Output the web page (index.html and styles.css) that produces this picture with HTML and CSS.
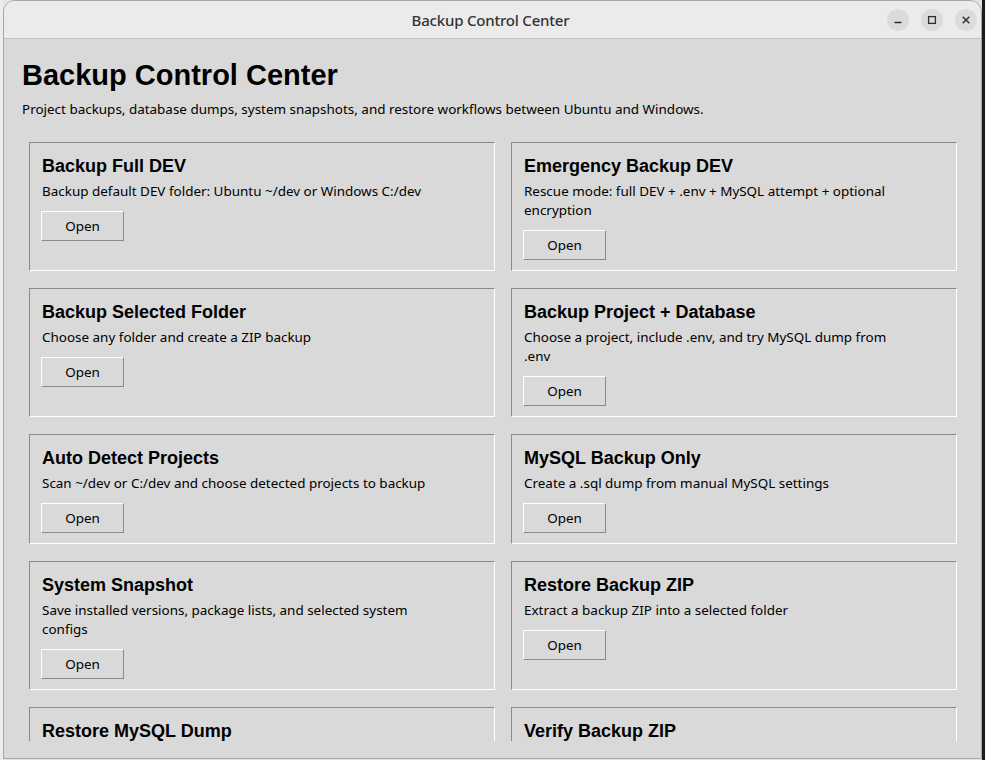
FILE: index.html
```html
<!DOCTYPE html>
<html lang="en">
<head>
<meta charset="utf-8">
<title>Backup Control Center</title>
<link rel="stylesheet" href="styles.css">
</head>
<body>
<div class="desktop">
  <div class="desk-left"></div>
  <div class="window">
    <div class="titlebar">
      <span></span>
      <span class="title">Backup Control Center</span>
      <div class="controls">
        <span class="ctl"><svg width="22" height="22" viewBox="0 0 22 22"><path d="M7.5 13.6H14.5" stroke="#2e2e2e" stroke-width="1.5" fill="none"/></svg></span>
        <span class="ctl"><svg width="22" height="22" viewBox="0 0 22 22"><rect x="7.6" y="7.6" width="6.8" height="6.8" stroke="#2e2e2e" stroke-width="1.3" fill="none"/></svg></span>
        <span class="ctl"><svg width="22" height="22" viewBox="0 0 22 22"><path d="M7.7 7.7L14.3 14.3M14.3 7.7L7.7 14.3" stroke="#2e2e2e" stroke-width="1.4" fill="none"/></svg></span>
      </div>
    </div>
    <div class="content">
      <header class="head">
        <h1>Backup Control Center</h1>
        <p class="sub">Project backups, database dumps, system snapshots, and restore workflows between Ubuntu and Windows.</p>
      </header>
      <div class="viewport">
        <div class="grid">
          <section class="card">
            <h2>Backup Full DEV</h2>
            <p class="desc">Backup default DEV folder: Ubuntu ~/dev or Windows C:/dev</p>
            <button class="btn">Open</button>
          </section>
          <section class="card">
            <h2>Emergency Backup DEV</h2>
            <p class="desc">Rescue mode: full DEV + .env + MySQL attempt + optional encryption</p>
            <button class="btn">Open</button>
          </section>
          <section class="card">
            <h2>Backup Selected Folder</h2>
            <p class="desc">Choose any folder and create a ZIP backup</p>
            <button class="btn">Open</button>
          </section>
          <section class="card">
            <h2>Backup Project + Database</h2>
            <p class="desc">Choose a project, include .env, and try MySQL dump from .env</p>
            <button class="btn">Open</button>
          </section>
          <section class="card">
            <h2>Auto Detect Projects</h2>
            <p class="desc">Scan ~/dev or C:/dev and choose detected projects to backup</p>
            <button class="btn">Open</button>
          </section>
          <section class="card">
            <h2>MySQL Backup Only</h2>
            <p class="desc">Create a .sql dump from manual MySQL settings</p>
            <button class="btn">Open</button>
          </section>
          <section class="card">
            <h2>System Snapshot</h2>
            <p class="desc">Save installed versions, package lists, and selected system configs</p>
            <button class="btn">Open</button>
          </section>
          <section class="card">
            <h2>Restore Backup ZIP</h2>
            <p class="desc">Extract a backup ZIP into a selected folder</p>
            <button class="btn">Open</button>
          </section>
          <section class="card">
            <h2>Restore MySQL Dump</h2>
          </section>
          <section class="card">
            <h2>Verify Backup ZIP</h2>
          </section>
        </div>
      </div>
    </div>
  </div>
  <div class="desk-right"></div>
</div>
</body>
</html>
```

FILE: styles.css
```css
* { box-sizing: border-box; }
html, body {
  margin: 0;
  padding: 0;
  width: 985px;
  height: 760px;
  overflow: hidden;
  background: #e4e4e4;
}
.desktop {
  display: flex;
  width: 985px;
  height: 760px;
}
.desk-left {
  width: 3px;
  background: #ececec;
  flex: none;
}
.desk-right {
  flex: 1;
  background: #1c1c1c;
}
.window {
  width: 979px;
  height: 759px;
  flex: none;
  display: flex;
  flex-direction: column;
  border: 1px solid #a6a6a6;
  border-radius: 12px 12px 0 0;
  overflow: hidden;
  background: #d9d9d9;
}
.titlebar {
  height: 38px;
  flex: none;
  display: grid;
  grid-template-columns: 1fr auto 1fr;
  align-items: center;
  background: #ebebeb;
  border-bottom: 1px solid #c3c3c3;
  padding: 0 4px 0 0;
}
.title {
  font-family: "Noto Sans", "Open Sans", sans-serif;
  font-size: 15px;
  font-weight: 500;
  color: #333333;
  letter-spacing: -0.2px;
}
.controls {
  justify-self: end;
  display: flex;
  gap: 12px;
}
.ctl {
  width: 22px;
  height: 22px;
  border-radius: 50%;
  background: #dbdbdb;
  display: flex;
}
.content {
  flex: 1;
  min-height: 0;
  display: flex;
  flex-direction: column;
  padding-bottom: 17px;
}
.head {
  padding: 20px 0 0 18px;
}
h1 {
  margin: 0;
  font-family: "Liberation Sans", Arial, sans-serif;
  font-weight: bold;
  font-size: 29px;
  color: #000;
}
.sub {
  margin: 8px 0 0;
  font-family: "Noto Sans", sans-serif;
  font-size: 13.45px;
  line-height: 19px;
  color: #000;
}
.viewport {
  flex: 1;
  min-height: 0;
  overflow: hidden;
  margin-top: 23px;
  padding-left: 25px;
}
.grid {
  display: grid;
  grid-template-columns: 466px 446px;
  column-gap: 16px;
  row-gap: 17px;
  align-items: stretch;
}
.card {
  border: 1px solid;
  border-color: #8a8a8a #ffffff #ffffff #8a8a8a;
  padding: 13px 11px 10px 12px;
  display: flex;
  flex-direction: column;
  align-items: flex-start;
}
h2 {
  margin: 0;
  font-family: "Liberation Sans", Arial, sans-serif;
  font-weight: bold;
  font-size: 18px;
  line-height: 20px;
  color: #000;
}
.desc {
  margin: 6px 0 0;
  max-width: 386px;
  font-family: "Noto Sans", sans-serif;
  font-size: 13.45px;
  line-height: 19px;
  color: #000;
}
.btn {
  margin: 10px 0 0 -1px;
  width: 83px;
  height: 30px;
  border: 1px solid;
  border-color: #ffffff #8a8a8a #8a8a8a #ffffff;
  background: #d9d9d9;
  font-family: "Noto Sans", sans-serif;
  font-size: 13.45px;
  color: #000;
  padding: 0;
  border-radius: 0;
}
```
